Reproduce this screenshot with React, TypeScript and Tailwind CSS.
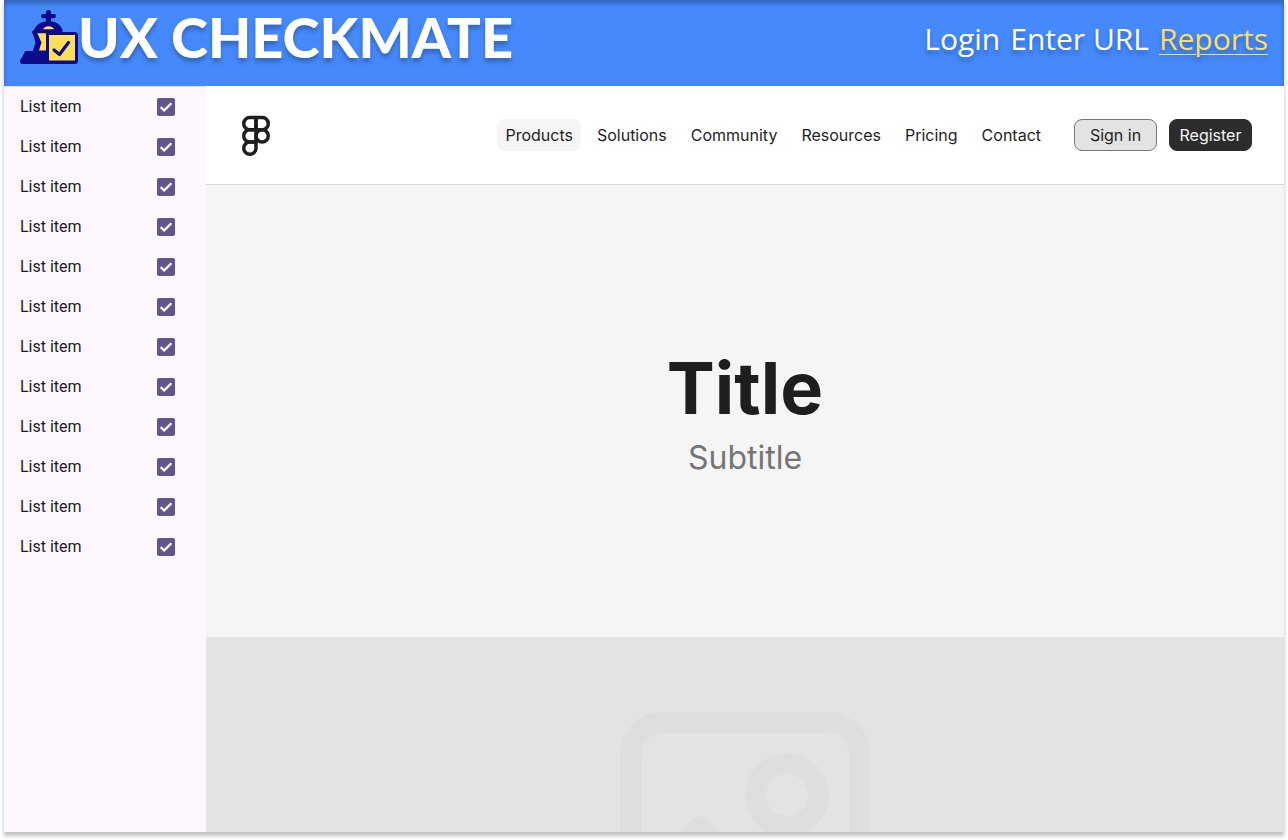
import { Figma } from "lucide-react";

const checklist = Array.from({ length: 12 }, (_, i) => `check-${i + 1}`);
const links = ["Products", "Solutions", "Community", "Resources", "Pricing", "Contact"];

function Logo() {
  return (
    <svg viewBox="0 0 58 54" className="h-[54px] w-[58px] shrink-0" aria-hidden="true">
      <g fill="#0d0b8c">
        <rect x="26" y="0" width="5" height="14" rx="2.500" />
        <rect x="21" y="4" width="15" height="4.200" rx="2.100" />
        <path d="M14 20c2.300-5.500 7.500-9 14.500-9S40.700 14.500 42.500 20v5H14.500c-3.200-.7-3.200-4.300-.5-5z" />
        <path d="M13 23h16v19H12.500l3-9z" />
        <path d="M6.500 41H30v13H2.500C.8 54 0 52.800 0 51.500c0-1.500.8-2.800 2-4l2.500-5c.4-1 1-1.500 2-1.500z" />
        <rect x="26" y="22" width="32" height="32" rx="3.500" />
      </g>
      <path d="M23 19.200c1-1.900 3-2.900 5.500-2.900s4.500 1 5.500 2.900z" fill="#ffde59" />
      <path d="M17.300 23.300h8.700v17.200h-7l2.500-8z" fill="#ffde59" />
      <rect x="29" y="25" width="26" height="25.500" fill="#ffde59" />
      <path d="M34 40l5.500 4.500L48.500 32.500" fill="none" stroke="#0d0b8c" strokeWidth="3.200" strokeLinecap="round" strokeLinejoin="round" />
    </svg>
  );
}

function ChecklistRow({ id }: { id: string }) {
  return (
    <li className="flex h-10 items-center justify-between pr-[31px] pl-4">
      <label htmlFor={id} className="text-base leading-6">
        List item
      </label>
      <span className="grid size-[18px]">
        <input
          id={id}
          type="checkbox"
          defaultChecked
          className="peer col-start-1 row-start-1 size-[18px] appearance-none rounded-[2px] border-2 border-[#65558f] checked:bg-[#65558f]"
        />
        <svg viewBox="0 0 18 18" className="pointer-events-none col-start-1 row-start-1 hidden size-[18px] peer-checked:block" aria-hidden="true">
          <path d="M3.700 9.200l3.400 3.300 7.300-7.300" fill="none" stroke="#fff" strokeWidth="2.300" />
        </svg>
      </span>
    </li>
  );
}

function PlaceholderImage() {
  return (
    <svg viewBox="0 0 250 250" className="size-[250px] shrink-0" fill="none" stroke="#dedede" strokeWidth="21" strokeLinejoin="round" aria-hidden="true">
      <rect x="10.500" y="10.500" width="229" height="229" rx="31" />
      <circle cx="167" cy="83" r="31.500" />
      <path d="M31 161l49-46 125 125" />
    </svg>
  );
}

export default function App() {
  return (
    <div className="h-screen overflow-hidden bg-white px-1 pb-2 font-['Inter',sans-serif]">
      <div className="flex h-full flex-col bg-white shadow-[0_4px_4px_rgba(0,0,0,0.25)]">
        <header className="flex h-[86px] shrink-0 justify-between bg-[#4589fc] px-4 shadow-[inset_0_4px_4px_rgba(0,0,0,0.25)] [text-shadow:0_4px_4px_rgba(0,0,0,0.25)]">
          <div className="flex items-start pt-[10px]">
            <Logo />
            <h1 className="font-['Lato',sans-serif] text-[56px] leading-[54px] font-black text-white">UX CHECKMATE</h1>
          </div>
          <nav className="flex gap-2.5 pt-[19px] font-['Open_Sans',sans-serif] text-[30px] leading-10 text-white">
            <a href="#login">Login</a>
            <a href="#enter-url">Enter URL</a>
            <a href="#reports" className="text-[#ffde59] underline decoration-1 underline-offset-4">
              Reports
            </a>
          </nav>
        </header>

        <div className="flex min-h-0 flex-1">
          <aside className="w-[202px] shrink-0 border-t border-[#e0dae3] bg-[#fef7ff] font-['Roboto',sans-serif] text-[#1d1b20]">
            <ul>
              {checklist.map((id) => (
                <ChecklistRow key={id} id={id} />
              ))}
            </ul>
          </aside>

          <main className="flex min-w-0 flex-1 flex-col">
            <div className="flex h-[99px] shrink-0 items-center justify-between border-b border-[#d9d9d9] bg-white pr-8 pl-[29px] text-base text-[#1e1e1e]">
              <a href="#home" aria-label="Home">
                <Figma className="size-[42px]" />
              </a>
              <div className="flex items-center gap-[25px]">
                <nav className="flex gap-2 leading-4">
                  {links.map((label) => (
                    <a key={label} href={`#${label.toLowerCase()}`} className={label === "Products" ? "rounded-lg bg-[#f5f5f5] p-2" : "p-2"}>
                      {label}
                    </a>
                  ))}
                </nav>
                <div className="flex gap-3 leading-4">
                  <button type="button" className="h-8 w-[83px] rounded-lg border border-[#767676] bg-[#e3e3e3]">
                    Sign in
                  </button>
                  <button type="button" className="h-8 w-[83px] rounded-lg border border-[#2c2c2c] bg-[#2c2c2c] text-[#f5f5f5]">
                    Register
                  </button>
                </div>
              </div>
            </div>

            <section className="flex shrink-0 flex-col items-center gap-2 bg-[#f5f5f5] py-40">
              <h2 className="text-[72px] leading-[86px] font-bold text-[#1e1e1e]">Title</h2>
              <p className="text-[32px] leading-[38px] text-[#757575]">Subtitle</p>
            </section>

            <section className="flex min-h-0 flex-1 items-start justify-center overflow-hidden bg-[#e3e3e3] pt-[75px]">
              <PlaceholderImage />
            </section>
          </main>
        </div>
      </div>
    </div>
  );
}
